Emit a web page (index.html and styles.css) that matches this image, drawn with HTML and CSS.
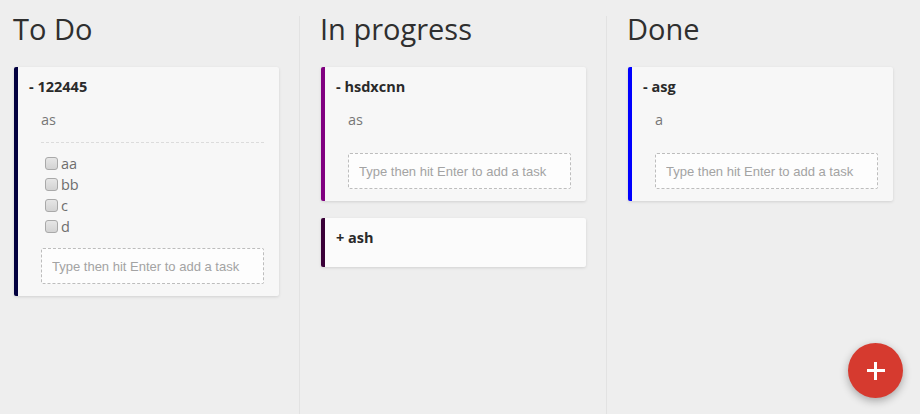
FILE: index.html
```html
<!DOCTYPE html>
<html>
<head>
<meta charset="utf-8">
<link rel="stylesheet" href="styles.css">
</head>
<body>
<div class="board">
  <section class="column">
    <div class="col-inner">
      <h1 class="col-title">To Do</h1>
      <div class="card c-navy">
        <div class="card-title">- 122445</div>
        <div class="card-body">
          <div class="desc">as</div>
          <ul class="checklist">
            <li><input type="checkbox" class="cb"><span>aa</span></li>
            <li><input type="checkbox" class="cb"><span>bb</span></li>
            <li><input type="checkbox" class="cb"><span>c</span></li>
            <li><input type="checkbox" class="cb"><span>d</span></li>
          </ul>
          <input class="task-input" type="text" placeholder="Type then hit Enter to add a task">
        </div>
      </div>
    </div>
  </section>
  <section class="column">
    <div class="col-inner">
      <h1 class="col-title">In progress</h1>
      <div class="card c-purple">
        <div class="card-title">- hsdxcnn</div>
        <div class="card-body">
          <div class="desc">as</div>
          <input class="task-input" type="text" placeholder="Type then hit Enter to add a task">
        </div>
      </div>
      <div class="card c-plum collapsed">
        <div class="card-title">+ ash</div>
      </div>
    </div>
  </section>
  <section class="column last">
    <div class="col-inner">
      <h1 class="col-title">Done</h1>
      <div class="card c-blue">
        <div class="card-title">- asg</div>
        <div class="card-body">
          <div class="desc">a</div>
          <input class="task-input" type="text" placeholder="Type then hit Enter to add a task">
        </div>
      </div>
    </div>
  </section>
</div>
<button class="fab" aria-label="Add"><span class="plus"></span></button>
</body>
</html>
```
FILE: styles.css
```css
html, body {
  margin: 0;
  padding: 0;
  height: 100%;
}
body {
  background: #eeeeee;
  font-family: "Open Sans", "Noto Sans", sans-serif;
  color: #333;
  overflow: hidden;
}
.board {
  display: grid;
  grid-template-columns: repeat(3, 307px);
  height: 100%;
}
.column {
  padding-top: 16px;
  height: 100%;
  box-sizing: border-box;
}
.col-inner {
  display: flex;
  flex-direction: column;
  margin-right: 7px;
  border-right: 1px solid #e2e2e2;
  height: 100%;
  box-sizing: border-box;
  padding-left: 14px;
  padding-right: 20px;
}
.column.last .col-inner {
  border-right-color: transparent;
}
.col-title {
  margin: -6px 0 19px -1px;
  font-weight: 400;
  font-size: 29px;
  line-height: 38px;
  color: #2f2f2f;
}
.card {
  background: #f7f7f7;
  border-left: 4px solid #000;
  border-radius: 2px;
  box-shadow: 0 1px 3px rgba(0, 0, 0, 0.12);
  padding: 10px 15px 12px 11px;
  margin-bottom: 17px;
}
.card.collapsed {
  background: #fbfbfb;
  padding-bottom: 19px;
}
.c-navy { border-left-color: #02003f; }
.c-purple { border-left-color: #800080; }
.c-plum { border-left-color: #3a0038; }
.c-blue { border-left-color: #0000ff; }
.card-title {
  font-weight: 700;
  font-size: 14.5px;
  line-height: 20px;
  color: #2a2a2a;
}
.card-body {
  margin-top: 13px;
  padding-left: 12px;
}
.desc {
  font-size: 14.5px;
  line-height: 20px;
  color: #777;
  padding-bottom: 12px;
}
.checklist {
  list-style: none;
  margin: 0;
  padding: 10px 0 0 0;
  border-top: 1px dashed #dcdcdc;
}
.checklist li {
  display: flex;
  align-items: center;
  height: 21px;
  font-size: 14.5px;
  color: #6e6e6e;
  padding-left: 4px;
}
.cb {
  -webkit-appearance: none;
  appearance: none;
  width: 13px;
  height: 13px;
  margin: 0 3px 0 0;
  border: 1px solid #a9a9a9;
  border-radius: 3px;
  background: linear-gradient(#e6e6e6, #d3d3d3);
  box-sizing: border-box;
}
.task-input {
  display: block;
  margin-top: 11px;
  width: 100%;
  height: 36px;
  box-sizing: border-box;
  border: 1px dashed #bdbdbd;
  border-radius: 2px;
  background: #fdfdfd;
  padding: 0 10px;
  font-family: "Liberation Sans", Arial, sans-serif;
  font-size: 13px;
  color: #444;
  outline: none;
}
.task-input::placeholder {
  color: #a3a3a3;
}
.fab {
  position: fixed;
  right: 17px;
  bottom: 16px;
  width: 55px;
  height: 55px;
  border-radius: 50%;
  border: none;
  background: #d63a2f;
  box-shadow: 0 3px 8px rgba(0, 0, 0, 0.3);
  padding: 0;
  display: flex;
  align-items: center;
  justify-content: center;
}
.plus {
  position: relative;
  width: 18px;
  height: 18px;
}
.plus::before, .plus::after {
  content: "";
  position: absolute;
  background: #fff;
}
.plus::before {
  left: 0;
  right: 0;
  top: 7.5px;
  height: 3px;
}
.plus::after {
  top: 0;
  bottom: 0;
  left: 7.5px;
  width: 3px;
}
```
